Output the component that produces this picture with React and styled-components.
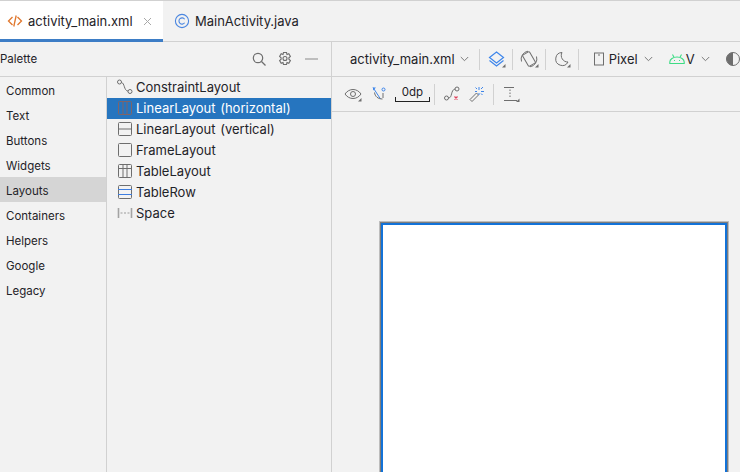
import React from "react";
import styled, { createGlobalStyle } from "styled-components";

const Global = createGlobalStyle`
  html, body { margin: 0; padding: 0; background: #f2f2f2; }
  body { font-family: Inter, "Noto Sans", sans-serif; color: #1f2328; }
`;

const Page = styled.div`
  width: 740px; height: 472px; overflow: hidden; display: flex; flex-direction: column;
  background: #f2f2f2; border-top: 1px solid #d1d1d1; box-sizing: border-box;
`;
const TabBar = styled.div`
  height: 40px; flex: none; display: flex; align-items: flex-start; border-bottom: 1px solid #d1d1d1;
`;
const Tab = styled.div`
  height: 41px; box-sizing: border-box; display: flex; align-items: center; font-size: 13px;
  padding: 2px 0 0 ${p => p.$pl}px; width: ${p => p.$w}px;
  background: ${p => p.$active ? "#ffffff" : "transparent"};
  border-bottom: 3px solid ${p => p.$active ? "#3d7dc6" : "transparent"};
`;
const TabLabel = styled.span`margin-left: ${p => p.$ml}px;`;
const Body = styled.div`flex: 1; display: flex; min-height: 0;`;
const Palette = styled.div`
  width: 331px; flex: none; display: flex; flex-direction: column; border-right: 1px solid #d1d1d1;
`;
const PaletteHead = styled.div`
  height: 34px; flex: none; display: flex; align-items: center; border-bottom: 1px solid #d1d1d1;
  font-size: 11.5px; padding-right: 13px;
`;
const PaletteTitle = styled.span`flex: 1; padding-bottom: 1px;`;
const HeadIcons = styled.div`display: flex; gap: 10px; align-items: center;`;
const PaletteBody = styled.div`flex: 1; display: flex; min-height: 0;`;
const Categories = styled.div`
  width: 106px; flex: none; border-right: 1px solid #d1d1d1; display: flex; flex-direction: column;
`;
const Category = styled.div`
  height: 25px; line-height: 28px; font-size: 11.5px; padding-left: 6px;
  background: ${p => p.$active ? "#d5d5d5" : "transparent"};
`;
const Items = styled.div`flex: 1; display: flex; flex-direction: column;`;
const Item = styled.div`
  height: 21px; box-sizing: border-box; padding: 0 0 1px 10px; display: flex; align-items: center; gap: 3px;
  font-size: 13px; word-spacing: 1px;
  background: ${p => p.$active ? "#2675bf" : "transparent"};
  color: ${p => p.$active ? "#ffffff" : "#1f2328"};
`;
const Design = styled.div`flex: 1; min-width: 0; display: flex; flex-direction: column;`;
const Toolbar = styled.div`
  height: 34px; flex: none; display: flex; align-items: center; border-bottom: 1px solid #d1d1d1;
  padding-left: ${p => p.$pl}px; font-size: 13px; white-space: nowrap;
`;
const Sep = styled.div`
  width: 1px; height: 21px; background: #d1d1d1; flex: none;
  margin: 0 ${p => p.$r}px 0 ${p => p.$l}px;
`;
const TextGroup = styled.span`margin-left: ${p => p.$ml ?? 0}px; display: inline-block; flex: none;`;
const Dp = styled.div`
  width: 35px; flex: none; margin: 0 4px 2px 9px; display: flex; flex-direction: column; align-items: stretch;
  font-size: 11.5px; text-align: center;
`;
const DpLabel = styled.div`line-height: 17px; height: 13px;`;
const DpBracket = styled.div`
  height: 5px; box-sizing: border-box; border: 1px solid #222; border-top: 0;
`;
const Canvas = styled.div`flex: 1; min-height: 0; padding: 111px 0 0 49px;`;
const Device = styled.div`
  width: 346px; height: 260px; box-sizing: border-box; background: #fff; border: 2px solid #1272d8;
  box-shadow: 0 0 0 1px #7d7d7d, 0 0 0 2px #bdbdbd;
`;

const Ic = ({ w = 16, h = 16, children, style }) => (
  <svg width={w} height={h} viewBox={`0 0 ${w} ${h}`} fill="none" style={{ flex: "none", ...style }}>{children}</svg>
);
const G = "#6e6e6e";
const B = "#3d85ea";
const Corner = ({ x, y }) => <path d={`M${x} ${y}h3.5v-3.5z`} fill="#6e6e6e" />;

const CodeIcon = () => (
  <Ic><path d="M5.5 4 1.5 8l4 4M10.5 4l4 4-4 4" stroke="#e0762c" strokeWidth="1.3" /><path d="M9.2 2.5 6.8 13.5" stroke="#e0762c" strokeWidth="1.3" /></Ic>
);
const ClassIcon = () => (
  <Ic><circle cx="8" cy="8" r="6.6" stroke="#4a86e0" strokeWidth="1.1" /><path d="M10.6 6.2A3.1 3.1 0 1 0 10.6 9.8" stroke="#4a86e0" strokeWidth="1.1" /></Ic>
);
const Close = () => (
  <Ic w={9} h={9} style={{ marginLeft: 10 }}><path d="M1 1l7 7M8 1 1 8" stroke="#a8a8a8" strokeWidth="1" /></Ic>
);
const Search = () => (
  <Ic><circle cx="7" cy="7" r="4.7" stroke={G} strokeWidth="1.2" /><path d="m10.5 10.5 4 4" stroke={G} strokeWidth="1.2" /></Ic>
);
const Gear = () => (
  <Ic><path d="M6.5 1.5h3l.5 2 1.8-.7 1.6 2.6-1.5 1.4v1.4l1.5 1.4-1.6 2.6-1.8-.7-.5 2h-3l-.5-2-1.8.7-1.6-2.6 1.5-1.4V6.8L2.6 5.4l1.6-2.6 1.8.7z" stroke={G} strokeWidth="1.1" /><circle cx="8" cy="7.5" r="2" stroke={G} strokeWidth="1.1" /></Ic>
);
const Minus = () => <Ic w={13} style={{ marginLeft: 2 }}><path d="M0 8h13" stroke="#9a9a9a" strokeWidth="1.2" /></Ic>;

const Frame = ({ stroke = "#6e6e6e", children }) => (
  <Ic><rect x="1.5" y="1.5" width="13" height="13" rx="1" stroke={stroke} />{children}</Ic>
);
const ICONS = {
  constraint: <Ic><circle cx="2.5" cy="3" r="2" stroke={G} /><circle cx="13" cy="12.5" r="2" stroke={G} /><path d="M4.4 3.5c3.5.5 2.2 8 6.7 8.7" stroke={G} /></Ic>,
  horizontal: <Frame stroke="#7f6468"><path d="M6 1.5v13M10 1.5v13" stroke="#7f6468" /></Frame>,
  vertical: <Frame><path d="M1.5 8h13" stroke={G} /></Frame>,
  frame: <Frame />,
  table: <Frame><path d="M1.5 5.5h13M6 1.5v13M10 1.5v13" stroke={G} /></Frame>,
  row: <Frame><path d="M1 5.5h14M1 10.5h14" stroke="#3d7de0" strokeWidth="1.2" /></Frame>,
  space: <Ic><path d="M1.5 3v10M14.5 3v10" stroke="#a3a3a3" strokeWidth="1.6" /><path d="M3.5 8h9" stroke="#9a9a9a" strokeDasharray="2 1.5" /></Ic>,
};

const categories = ["Common", "Text", "Buttons", "Widgets", "Layouts", "Containers", "Helpers", "Google", "Legacy"];
const items = [
  ["constraint", "ConstraintLayout"],
  ["horizontal", "LinearLayout (horizontal)"],
  ["vertical", "LinearLayout (vertical)"],
  ["frame", "FrameLayout"],
  ["table", "TableLayout"],
  ["row", "TableRow"],
  ["space", "Space"],
];

const Chevron = ({ ml = 5 }) => (
  <Ic w={9} h={6} style={{ marginLeft: ml }}><path d="M.8 1l3.7 3.7L8.2 1" stroke="#7a7a7a" /></Ic>
);

export default function App() {
  return (
    <>
      <Global />
      <Page>
        <TabBar>
          <Tab $active $w={163} $pl={7}>
            <CodeIcon /><TabLabel $ml={5}>activity_main.xml</TabLabel><Close />
          </Tab>
          <Tab $w={170} $pl={11}>
            <ClassIcon /><TabLabel $ml={5}>MainActivity.java</TabLabel>
          </Tab>
        </TabBar>
        <Body>
          <Palette>
            <PaletteHead>
              <PaletteTitle>Palette</PaletteTitle>
              <HeadIcons>
                <Search /><Gear /><Minus />
              </HeadIcons>
            </PaletteHead>
            <PaletteBody>
              <Categories>
                {categories.map(c => <Category key={c} $active={c === "Layouts"}>{c}</Category>)}
              </Categories>
              <Items>
                {items.map(([k, t]) => (
                  <Item key={t} $active={k === "horizontal"}>{ICONS[k]}{t}</Item>
                ))}
              </Items>
            </PaletteBody>
          </Palette>
          <Design>
            <Toolbar $pl={18}>
              <TextGroup>activity_main.xml</TextGroup>
              <Chevron />
              <Sep $l={10} $r={8} />
              <Ic w={18} h={18}>
                <path d="M8.5 2 15.5 7.5 8.5 13 1.5 7.5z" stroke={B} strokeWidth="1.2" />
                <path d="M1.5 10.5 8.5 16l7-5.5" stroke={B} strokeWidth="1.2" />
                <Corner x={14} y={17.5} />
              </Ic>
              <Sep $l={6} $r={7} />
              <Ic w={19} h={18}>
                <rect x="5" y="2.5" width="8" height="13" rx="1" stroke={G} transform="rotate(-30 9 9)" />
                <path d="M1.5 11.5A8 8 0 0 1 8 1.2M16.5 6.5A8 8 0 0 1 10 16.8" stroke={G} />
                <Corner x={15} y={17.5} />
              </Ic>
              <Sep $l={6} $r={8} />
              <Ic w={17} h={18}>
                <path d="M8 2.5a6.5 6.5 0 1 0 6 9.5A6.5 6.5 0 0 1 8 2.5z" stroke={G} />
                <Corner x={13} y={17.5} />
              </Ic>
              <Sep $l={7} $r={15} />
              <Ic w={10} h={14}><rect x=".5" y="1" width="9" height="12" stroke={G} /><path d="M4 3h2" stroke={G} /></Ic>
              <TextGroup $ml={5}>Pixel</TextGroup>
              <Chevron ml={6} />
              <Ic w={16} h={10} style={{ marginLeft: 16 }}><path d="M.8 9.5V8a7.2 5 0 0 1 14.4 0v1.5zM3.5.5 5 3.2M12.5.5 11 3.2" stroke="#3ddc84" strokeWidth="1.1" /><path d="M5 6.5h1M10 6.5h1" stroke="#3ddc84" /></Ic>
              <TextGroup $ml={1}>V</TextGroup>
              <Chevron ml={6} />
              <Ic w={16} style={{ marginLeft: 15 }}><circle cx="8" cy="8" r="6.5" stroke={G} /><path d="M8 1.5a6.5 6.5 0 0 0 0 13z" fill={G} /></Ic>
            </Toolbar>
            <Toolbar $pl={12}>
              <Ic w={18} h={16}>
                <path d="M1 8c4-6 12-6 16 0-4 6-12 6-16 0z" stroke={G} /><circle cx="9" cy="8" r="2.5" stroke={G} />
                <Corner x={14} y={15.5} />
              </Ic>
              <Ic w={14} h={16} style={{ marginLeft: 10 }}>
                <path d="M1 1.5 8.5 13" stroke={B} /><path d="M1 1.5h3L1 4.5z" fill={B} /><circle cx="11.5" cy="3.5" r="1.5" stroke={B} />
                <path d="M2.5 6.5c.5 4 3.5 6.5 8 6.5M11 7v5" stroke={G} />
              </Ic>
              <Dp><DpLabel>0dp</DpLabel><DpBracket /></Dp>
              <Sep $l={0} $r={9} />
              <Ic w={16} h={16}>
                <circle cx="2.5" cy="12" r="2" stroke={G} /><circle cx="13" cy="3" r="2" stroke={G} />
                <path d="M4.5 12c4 0 2-8 6.5-9" stroke={G} />
                <path d="M10.5 10.5l3 3M13.5 10.5l-3 3" stroke="#e0405a" strokeWidth="1.2" />
              </Ic>
              <Ic w={15} h={16} style={{ marginLeft: 9 }}>
                <path d="M1 13.5 7.5 7l2 2L3 15.5z" stroke={G} />
                <path d="M10 1v3M10 7v2M12 5.5h3M6 5.5h2M12 3l2-2M12 7.5l1.5 1.5M8 3 6.5 1.5" stroke={B} />
              </Ic>
              <Sep $l={9} $r={10} />
              <Ic w={16} h={16}>
                <path d="M0 1.5h10M0 14.5h13" stroke={G} />
                <path d="M6 3.5v9" stroke={G} strokeDasharray="1.5 1.5" />
                <Corner x={12} y={16} />
              </Ic>
            </Toolbar>
            <Canvas><Device /></Canvas>
          </Design>
        </Body>
      </Page>
    </>
  );
}
